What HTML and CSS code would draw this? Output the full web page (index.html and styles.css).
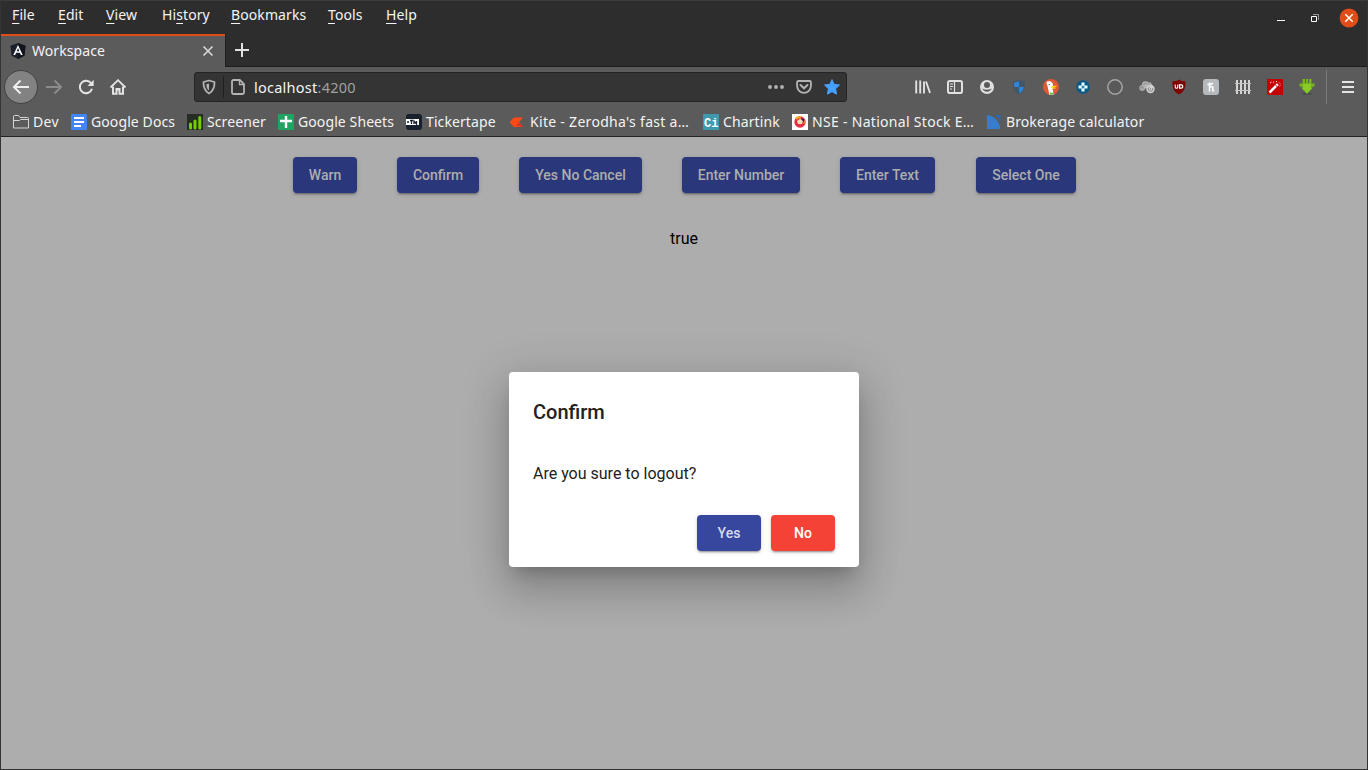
FILE: index.html
```html
<!DOCTYPE html>
<html lang="en">
<head>
<meta charset="utf-8">
<title>Workspace</title>
<link rel="stylesheet" href="styles.css">
</head>
<body>
<div class="window">
  <header class="titlebar">
    <nav class="menu">
      <span><u>F</u>ile</span><span><u>E</u>dit</span><span><u>V</u>iew</span><span class="m-history">Hi<u>s</u>tory</span><span><u>B</u>ookmarks</span><span><u>T</u>ools</span><span><u>H</u>elp</span>
    </nav>
    <div class="controls">
      <svg width="10" height="16" viewBox="0 0 10 16"><path d="M1 10.500h8" stroke="#fff"/></svg>
      <svg width="10" height="16" viewBox="0 0 10 16"><path d="M3 4.500h5.500V10" fill="none" stroke="#999"/><path d="M1.500 6.500h5v5h-5z" fill="none" stroke="#fff"/></svg>
      <svg width="20" height="20" viewBox="0 0 20 20"><circle cx="10" cy="10" r="9.400" fill="#e04d19"/><path d="M6.300 6.300l7.400 7.400M13.700 6.300l-7.400 7.400" stroke="#fff" stroke-width="1.500"/></svg>
    </div>
  </header>

  <div class="tabs">
    <div class="tab">
      <svg width="16" height="16" viewBox="0 0 16 16"><path d="M8 0l7.600 2.700-1.200 10L8 16l-6.400-3.300L.4 2.700z" fill="#1c202b"/><path d="M8 0l7.600 2.700-1.200 10L8 16z" fill="#11151d"/><path d="M3.300 12L8 2l4.700 10h-1.900l-.9-2.200H6.100L5.200 12zM6.700 8.200h2.600L8 5.100z" fill="#fff" fill-rule="evenodd"/></svg>
      <span class="tab-title">Workspace</span>
      <svg width="12" height="12" viewBox="0 0 12 12"><path d="M1.500 1.500l9 9M10.500 1.500l-9 9" stroke="#ddd" stroke-width="1.500"/></svg>
    </div>
    <div class="new-tab"><svg width="16" height="16" viewBox="0 0 16 16"><path d="M8 1v14M1 8h14" stroke="#e2e2e2" stroke-width="2"/></svg></div>
  </div>

  <div class="toolbar">
    <div class="history">
      <span class="back"><svg width="18" height="16" viewBox="0 0 18 16"><path d="M17 8H2M8.500 1.500L2 8l6.500 6.500" fill="none" stroke="#eee" stroke-width="2"/></svg></span>
      <svg width="18" height="16" viewBox="0 0 18 16"><path d="M1 8h15M9.500 1.500L16 8l-6.500 6.500" fill="none" stroke="#8b8b8b" stroke-width="2"/></svg>
      <svg width="16" height="16" viewBox="0 0 16 16"><path d="M13.300 4.600A6.200 6.200 0 1 0 14 9.800" fill="none" stroke="#e4e4e4" stroke-width="2"/><path d="M15.700.8v6.100H9.600z" fill="#e4e4e4"/></svg>
      <svg width="18" height="16" viewBox="0 0 18 16"><path d="M1.500 8.500L9 1.200l7.500 7.300" fill="none" stroke="#e4e4e4" stroke-width="1.800"/><path d="M4 7.500v7.200h3.500V10h3v4.700H14V7.500" fill="none" stroke="#e4e4e4" stroke-width="2"/><path d="M7.500 9.500h3v2h-3z" fill="#e4e4e4"/></svg>
    </div>
    <div class="urlbar">
      <span class="shield"><svg width="14" height="16" viewBox="0 0 14 16"><path d="M7 1.500L12.500 3c.2 5.500-1.200 9-5.500 11.500C2.700 12 1.300 8.500 1.500 3z" fill="none" stroke="#b4b4b4" stroke-width="1.800" stroke-linejoin="round"/><path d="M7 4.500v7C4.800 9.800 4.300 7.700 4.300 5.200z" fill="#b4b4b4"/></svg></span>
      <svg width="14" height="16" viewBox="0 0 14 16"><path d="M2.500 1h6.300L13 5.200v8.300a1.500 1.500 0 0 1-1.500 1.500h-9A1.500 1.500 0 0 1 1 13.500v-11A1.500 1.500 0 0 1 2.500 1z" fill="none" stroke="#b4b4b4" stroke-width="1.800"/><path d="M8.500 1v4.500H13" fill="none" stroke="#b4b4b4" stroke-width="1.300"/></svg>
      <span class="address">localhost<span class="port">:4200</span></span>
      <span class="url-actions">
        <svg width="16" height="16" viewBox="0 0 16 16" fill="#b4b4b4"><circle cx="2" cy="8" r="1.900"/><circle cx="8" cy="8" r="1.900"/><circle cx="14" cy="8" r="1.900"/></svg>
        <svg width="16" height="16" viewBox="0 0 16 16"><path d="M2.300 2h11.400a1.200 1.200 0 0 1 1.200 1.200V7a6.900 6.900 0 0 1-13.800 0V3.200A1.200 1.200 0 0 1 2.300 2z" fill="none" stroke="#b4b4b4" stroke-width="1.800"/><path d="M4.500 6L8 9.300 11.500 6" fill="none" stroke="#b4b4b4" stroke-width="2" stroke-linecap="round"/></svg>
        <svg width="16" height="16" viewBox="0 0 16 16"><path d="M8 .6l2.200 4.800 5.300.6-3.900 3.700 1 5.500L8 12.600l-4.600 2.600 1-5.500L.5 6l5.300-.6z" fill="#45a1ff" stroke="#45a1ff" stroke-linejoin="round"/></svg>
      </span>
    </div>
    <div class="extensions">
      <svg viewBox="0 0 16 16"><path d="M1.200 1.500v13M5.200 1.500v13M9 2.500v12M11 2.500l4 11.500" stroke="#e0e0e0" stroke-width="1.900" fill="none"/></svg>
      <svg viewBox="0 0 16 16" fill="none" stroke="#e0e0e0"><rect x="1" y="2" width="14" height="12" rx="1.800" stroke-width="2"/><path d="M7.500 2v12" stroke-width="1.200"/><path d="M3 5h3M3 7.500h3M3 10h2"/></svg>
      <svg viewBox="0 0 16 16"><circle cx="8" cy="8" r="7" fill="#e0e0e0"/><circle cx="8" cy="6" r="3" fill="#5b5b5b"/><path d="M3.300 9.500c2.500 1.600 6.900 1.600 9.400 0-.6 2-2.500 3.200-4.700 3.200S3.900 11.500 3.300 9.500z" fill="#5b5b5b"/></svg>
      <svg viewBox="0 0 16 16"><path d="M8 .5C6 2 4 2.500 2 2.500c0 6 .5 10 6 13 5.500-3 6-7 6-13-2 0-4-.5-6-2z" fill="#42576a"/><path d="M8 2.300V8H3.200C3 6.500 3 5 3 3.700 5 3.500 6.500 3 8 2.300zM8 8h4.800c-.4 3-1.900 5-4.800 6.300z" fill="#2b87dd"/></svg>
      <svg viewBox="0 0 16 16"><circle cx="8" cy="8" r="8" fill="#de5833"/><path d="M3.300 3.400c1-1.500 4-1.800 5.600.1 1.300 1.200 1.400 3 1.200 4.400l-.5 2.500 1.300 5.200-4.500.2L4.500 7z" fill="#fff"/><path d="M8.300 7.800c1.700-1.200 4.500-1.300 5.500-.8-.3 1.100-2.400 1-3.100 1.600 1 .5 2 .3 2.500.4-.6 1-3.600 1-4.700.1z" fill="#fdd20a"/><path d="M7 13l2 .9 2-1v2.300l-4 .4z" fill="#65bc46"/><circle cx="6.300" cy="5.600" r=".7" fill="#2d4f8e"/></svg>
      <svg viewBox="0 0 16 16"><circle cx="8" cy="8" r="6.800" fill="#075987"/><path d="M6.500 3.500h3v3h3v3h-3v3h-3v-3h-3v-3h3z" fill="#e9fbff"/><circle cx="8" cy="8" r="1.500" fill="#2886b5"/></svg>
      <svg viewBox="0 0 16 16"><circle cx="8" cy="8" r="7.200" fill="#595959" stroke="#a5a5a5" stroke-width="1.500"/></svg>
      <svg viewBox="0 0 16 16"><circle cx="3.200" cy="9" r="3" fill="#a6a6a6"/><circle cx="6.500" cy="5.800" r="3.600" fill="#b4b4b4"/><path d="M9 3l3 .5 1.500 3-3 1z" fill="#a6a6a6"/><path d="M1.500 9.500a2 2 0 0 1 3.500-1M4.500 6a2.300 2.300 0 0 1 4-1" fill="none" stroke="#8b8b8b"/><circle cx="11.500" cy="10" r="4.200" fill="#d4d4d4"/><circle cx="11.500" cy="10" r="2.300" fill="none" stroke="#858585" stroke-dasharray="9 3"/><circle cx="11.500" cy="10" r=".7" fill="#777"/></svg>
      <svg viewBox="0 0 16 16"><path d="M8 .4C6 1.800 4 2.300 1.500 2.300c0 6 .5 10 6.500 13.300 6-3.300 6.500-7.300 6.500-13.300C12 2.300 10 1.800 8 .4z" fill="#800000"/><path d="M4.200 5.500V8a1.300 1.300 0 0 0 2.600 0V5.500" fill="none" stroke="#fff" stroke-width="1.100"/><path d="M8.600 5.900h1.600a1.600 1.600 0 0 1 0 3.200H8.600z" fill="none" stroke="#fff" stroke-width="1.200"/></svg>
      <svg viewBox="0 0 16 16"><rect width="16" height="16" rx="3" fill="#b6b9bb"/><path d="M6.500 12.500V3.500M4.300 5.500q4 .5 5.500-1.500M6.500 9c1.500-2 3.500-2 3.300 0-.2 2-.3 3.600 1.500 2.600" fill="none" stroke="#fff" stroke-width="1.500"/></svg>
      <svg viewBox="0 0 16 16"><path d="M2 1v14M6 1v14M10 1v14M14 1v14" stroke="#d4d4d4" stroke-width="2"/><path d="M0 4.500h16M0 11.500h16" stroke="#c4c4c4"/></svg>
      <svg viewBox="0 0 16 16"><path fill="#c40000" d="M0 0h16v16H0z"/><path d="M2.500 13.500l6.500-6.500" stroke="#fff" stroke-width="2.500"/><path d="M9.500 6.500l1.300-1.300" stroke="#fff" stroke-width="2.500"/><path d="M3 4l1.500-.8M6 2.800l1.300 1M9 3l1-.8M12 3.500l1 1M12.500 7l1-.6" stroke="#ffd9d9"/></svg>
      <svg viewBox="0 0 16 16"><ellipse cx="8" cy="14.800" rx="5" ry="1" fill="#4b4b4b"/><path d="M3.500 0H6v4h1V0h2v4h1V0h2.500v4.500H15.500V7.500H12.500V8.500H14L8 15 2 8.500h1.500V7.500H.5V4.500h3z" fill="#76b51e"/><path d="M4 5h8v4h1l-5 5.300L3 9h1z" fill="#8aca27"/></svg>
    </div>
    <div class="app-menu"><svg width="14" height="16" viewBox="0 0 14 16"><path d="M1 3h12M1 8h12M1 13h12" stroke="#e4e4e4" stroke-width="2"/></svg></div>
  </div>

  <div class="bookmarks">
    <a class="bookmark"><svg viewBox="0 0 16 16"><path d="M.5 14V2.500Q.5 1.500 1.500 1.500h4l1.500 2h7.500q1 0 1 1V14zM.5 6.500h6l1-1h8" fill="none" stroke="#d5d5d5"/></svg><span class="b-dev">Dev</span></a>
    <a class="bookmark"><svg viewBox="0 0 16 16"><rect width="16" height="16" rx="1" fill="#4285f4"/><path d="M3 4h10M3 8h10M3 12h7" stroke="#fff" stroke-width="2"/></svg><span class="b-docs">Google Docs</span></a>
    <a class="bookmark"><svg viewBox="0 0 16 16"><path fill="#252c24" d="M0 0h16v16H0z"/><path d="M3.500 14V10M8 14V7M12.800 14V3.500" stroke="#70d000" stroke-width="3" stroke-linecap="round"/></svg><span class="b-screener">Screener</span></a>
    <a class="bookmark"><svg viewBox="0 0 16 16"><rect width="16" height="16" rx="1" fill="#20a464"/><path d="M8 2v12M2 7h12" stroke="#fff" stroke-width="2.400"/></svg><span class="b-sheets">Google Sheets</span></a>
    <a class="bookmark"><svg viewBox="0 0 16 16"><rect width="16" height="16" rx="3" fill="#17202c"/><path fill="#fff" d="M0 5h13v6H0z"/><path d="M1 8h2M4 6.500h3M5.500 6.500V10M8 10V7l2.500 3V7" fill="none" stroke="#17202c" stroke-width="1.300"/></svg><span class="b-ticker">Tickertape</span></a>
    <a class="bookmark"><svg viewBox="0 0 16 16"><path d="M4 3.500H13L9 8.300 13 13H4L-.5 8.300z" fill="#ff4a16"/><path d="M9 8.300L13 13 5.500 12z" fill="#dc3426"/></svg><span class="b-kite">Kite - Zerodha's fast a…</span></a>
    <a class="bookmark"><svg viewBox="0 0 16 16"><path fill="#3e99ac" d="M0 0h16v16H0z"/><text x="1" y="12.500" class="ci">Ci</text></svg><span class="b-chartink">Chartink</span></a>
    <a class="bookmark"><svg viewBox="0 0 16 16"><path fill="#fff" d="M0 0h16v16H0z"/><circle cx="8" cy="8" r="4" fill="#fff" stroke="#e22f46" stroke-width="3.400"/><path d="M4 5A5 5 0 0 1 9 3.500" fill="none" stroke="#f0a21d" stroke-width="2.500"/><path d="M12.500 6.500v3" stroke="#ea8427" stroke-width="2"/><path d="M8 5l3 1-1 4H6L5 7z" fill="#f7dfb0"/><path d="M8.500 4.500l3.500.5v3.500z" fill="#3b235f"/></svg><span class="b-nse">NSE - National Stock E…</span></a>
    <a class="bookmark"><svg viewBox="0 0 16 16"><path d="M1 1C8.500 2 13 7 14.500 15H1z" fill="#377dce"/><path d="M8.500 1h6v7C13.500 4.700 11.500 2.500 8.500 1z" fill="#246bc0"/></svg><span class="b-broker">Brokerage calculator</span></a>
  </div>

  <main class="page">
    <div class="actions">
      <button class="w-warn">Warn</button><button class="w-confirm">Confirm</button><button class="w-ync">Yes No Cancel</button><button class="w-number">Enter Number</button><button class="w-text">Enter Text</button><button class="w-select">Select One</button>
    </div>
    <p class="result">true</p>
    <section class="dialog" role="dialog">
      <h1>Confirm</h1>
      <p>Are you sure to logout?</p>
      <div class="dialog-actions"><button class="yes">Yes</button><button class="no">No</button></div>
    </section>
  </main>
</div>
</body>
</html>
```
FILE: styles.css
```css
* { box-sizing: border-box; }
body { margin: 0; overflow: hidden; font-family: "Noto Sans", sans-serif; font-size: 14px; color: #f4f4f4; }
svg { display: block; flex: none; }
.window { width: 1368px; height: 770px; display: flex; flex-direction: column; background: #5b5b5b; border: 1px solid #343434; border-top: 0; }

.titlebar { height: 34px; flex: none; display: flex; justify-content: space-between; background: #2d2d2d; border-top: 1px solid #3c3c3c; }
.menu { display: grid; grid-template-columns: 46px 48px 56px 69px 97px 58px 50px; padding-left: 11px; line-height: 20px; padding-top: 4px; white-space: nowrap; letter-spacing: .1px; }
.menu u { text-decoration-thickness: 1px; text-underline-offset: 3px; text-decoration-skip-ink: none; }
.controls { display: flex; align-items: center; gap: 24px; padding: 1px 8px 0 0; }
.controls svg:last-child { margin-left: -5px; }

.tabs { height: 33px; flex: none; display: flex; align-items: flex-end; background: #2d2d2d; }
.tab { width: 224px; height: 33px; display: flex; align-items: center; padding: 0 11px 1px 9px; background: #5b5b5b; border-top: 2px solid #e04d19; }
.tab-title { flex: 1; margin-left: 6px; line-height: 20px; letter-spacing: .08px; }
.new-tab { flex: 1; height: 33px; padding: 8px; border-left: 1px solid #202020; border-bottom: 1px solid #1d1d1d; }

.toolbar { height: 40px; flex: none; display: flex; align-items: center; }
.history { width: 193px; display: flex; align-items: center; gap: 15px; padding-left: 3px; }
.back { width: 34px; height: 34px; flex: none; border: 1px solid #424242; border-radius: 50%; background: #828282; display: grid; place-items: center; }
.history > svg:nth-child(2) { margin-left: -8px; }
.urlbar { width: 653px; height: 30px; display: flex; align-items: center; background: #343434; border: 1px solid #242424; border-radius: 3px; }
.shield { width: 29px; height: 22px; padding: 3px 0 0 7px; margin-right: 7px; border-right: 1px solid #202020; }
.address { flex: 1; margin-left: 9px; line-height: 20px; font-size: 14.500px; letter-spacing: .25px; }
.port { color: #a0a0a0; }
.url-actions { display: flex; gap: 12px; padding-right: 6px; }
.extensions { width: 479px; display: flex; gap: 16px; padding-left: 68px; }
.extensions svg { width: 16px; height: 16px; }
.app-menu { height: 34px; padding: 9px 0 0 14px; border-left: 1px solid #7a7a7a; }

.bookmarks { height: 30px; flex: none; display: grid; grid-template-columns: 58px 116px 91px 128px 104px 193px 89px 194px 180px; align-items: center; padding-left: 12px; border-bottom: 1px solid #222; }
.bookmark { display: flex; align-items: center; gap: 4px; white-space: nowrap; line-height: 20px; letter-spacing: .1px; }
.bookmark svg { width: 16px; height: 16px; }
.b-dev { letter-spacing: .3px; }
.b-kite, .b-nse { letter-spacing: .3px; }
.ci { font: bold 12px "Liberation Mono", monospace; fill: #fff; }

.page { flex: 1; position: relative; background: #adadad; font-family: Roboto, sans-serif; color: #000; }
.actions { display: flex; justify-content: center; gap: 40px; padding-top: 20px; }
button { height: 36px; flex: none; padding: 0; border: 0; border-radius: 4px; background: #2a377b; color: #adadad; font: 500 14px/36px Roboto, sans-serif; box-shadow: 0 3px 1px -2px rgba(0,0,0,.2), 0 2px 2px rgba(0,0,0,.14), 0 1px 5px rgba(0,0,0,.12); }
.w-warn { width: 64px; }
.w-confirm { width: 82px; }
.w-ync { width: 123px; }
.w-number { width: 118px; }
.w-text { width: 95px; }
.w-select { width: 100px; margin: 0 -1px 0 1px; }
.result { margin: 36px 0 0; text-align: center; font-size: 16px; line-height: 20px; }
.dialog { position: absolute; left: 508px; top: 235px; width: 350px; height: 195px; padding: 24px; border-radius: 4px; background: #fff; color: #212121; box-shadow: 0 11px 15px -7px rgba(0,0,0,.2), 0 24px 38px 3px rgba(0,0,0,.14), 0 9px 46px 8px rgba(0,0,0,.12); }
.dialog h1 { margin: 0 0 31px; font-size: 20px; font-weight: 500; line-height: 32px; }
.dialog p { margin: 0; font-size: 16px; line-height: 30px; }
.dialog-actions { display: flex; justify-content: flex-end; gap: 10px; margin-top: 26px; }
.dialog button { width: 64px; color: #d7daec; background: #37479e; }
.dialog .no { background: #f44336; color: #fff; }
```
